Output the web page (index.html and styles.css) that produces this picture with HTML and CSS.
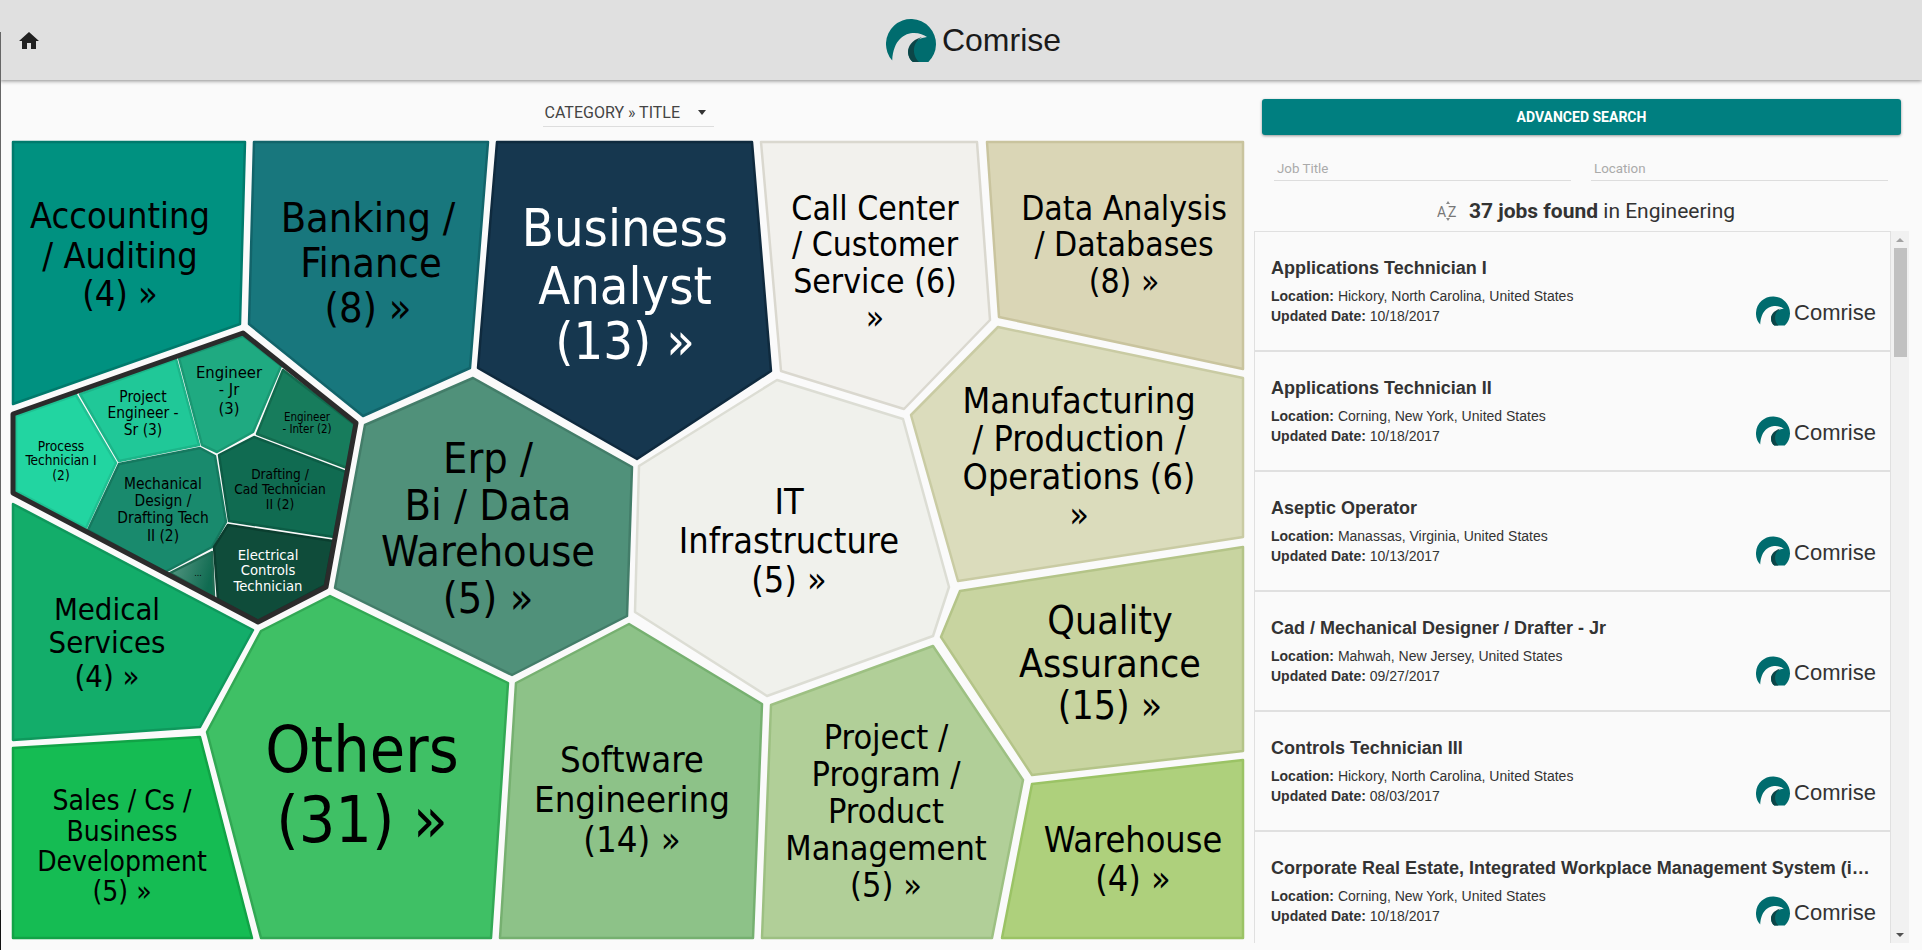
FILE: index.html
```html
<!DOCTYPE html>
<html lang="en">

<head>
    <meta charset="UTF-8">
    <meta name="viewport" content="width=device-width, initial-scale=1.0">
    <title>Comrise Jobs</title>
    <link rel="stylesheet" href="styles.css">
</head>

<body>

    <svg class="defs" width="0" height="0">
        <defs>
            <linearGradient id="more-fade" x1="0" y1="0" x2="1" y2="0.3">
                <stop offset="0" stop-color="#5a9a86" />
                <stop offset="1" stop-color="#106b51" />
            </linearGradient>
        </defs>
        <symbol id="swirl" viewBox="0 0 50 43">
            <path class="swirl-main" d="M6.2 41.5A25 25 0 1 1 42.35 43H27C20 38 18 22 41 18C32 11 8 10 6.2 41.5Z" />
            <path class="swirl-dark" d="M27 43C20 38 18 22 38 17.5C28 20 24 34 33 43Z" />
        </symbol>
    </svg>

    <header class="topbar">
        <a class="home" href="#">
            <svg width="24" height="24" viewBox="0 0 24 24">
                <path d="M10 20v-6h4v6h5v-8h3L12 3 2 12h3v8z" />
            </svg>
        </a>
        <div class="brand">
            <svg class="brand-mark" width="50" height="43">
                <use href="#swirl" />
            </svg>
            <span>Comrise</span>
        </div>
    </header>

    <div class="edge"></div>

    <main class="layout">
        <section class="chart">
            <div class="chart-head">
                <div class="picker">
                    <span>CATEGORY » TITLE</span>
                    <i class="caret"></i>
                </div>
            </div>

            <svg class="voronoi" width="1254" height="820" viewBox="0 130 1254 820">
                <polygon class="c-accounting" points="13,142 245,142 240,324 13,404" />
                <polygon class="c-banking" points="254,142 488,142 470,368 363,416 249,324" />
                <polygon class="c-business" points="497,142 752,142 771,371 637,459 478,368" />
                <polygon class="c-call" points="761,142 977,142 990,320 904,409 781,371" />
                <polygon class="c-data" points="987,142 1243,142 1243,369 999,317" />
                <polygon class="c-manufacturing" points="998,327 1243,378 1243,537 958,581 911,415" />
                <polygon class="c-it" points="777,380 903,419 949,587 933,636 767,696 635,612 639,466" />
                <polygon class="c-quality" points="960,591 1243,547 1243,751 1032,775 941,637" />
                <polygon class="c-warehouse" points="1032,784 1243,760 1243,938 1002,938" />
                <polygon class="c-project" points="933,646 1023,780 992,938 762,938 771,705" />
                <polygon class="c-software" points="629,624 762,704 753,938 500,938 516,683" />
                <polygon class="c-others" points="330,596 508,683 491,938 261,938 207,732 261,631" />
                <polygon class="c-erp" points="473,378 632,467 627,616 512,675 335,588 365,425" />
                <polygon class="c-medical" points="13,504 253,630 200,727 13,740" />
                <polygon class="c-sales" points="13,748 200,737 252,938 13,938" />

                <polygon class="group-bg" points="243,333 356,423 326,587 258,622 13,493 13,414" />
                <polygon class="c-process" points="16,416 76,395 116,463 86,528 16,491" />
                <polygon class="c-projeng" points="80,394 176,359 199,445 119,461" />
                <polygon class="c-engjr" points="179,358 243,336 281,366 253,432 217,452 202,445" />
                <polygon class="c-inter" points="283,370 355,425 347,468 257,434" />
                <polygon class="c-drafting" points="254,437 346,472 334,537 229,521 219,455" />
                <polygon class="c-mech" points="119,464 200,448 215,456 226,522 212,547 165,572 88,530" />
                <polygon class="c-more" fill="url(#more-fade)" points="170,573 212,552 214,597" />
                <polygon class="c-electrical" points="228,525 333,541 325,585 258,621 218,600 214,547" />
                <polygon class="group-ring" points="243,333 356,423 326,587 258,622 13,493 13,414" />

                <text class="fs-35" x="120"><tspan x="120" y="228">Accounting</tspan><tspan x="120" y="268">/ Auditing</tspan><tspan x="120" y="306">(4) »</tspan></text>
                <text class="fs-41" x="368"><tspan x="368" y="232">Banking /</tspan><tspan x="371" y="277">Finance</tspan><tspan x="368" y="322">(8) »</tspan></text>
                <text class="fs-52 light" x="625"><tspan x="625" y="246">Business</tspan><tspan x="625" y="304">Analyst</tspan><tspan x="625" y="359">(13) »</tspan></text>
                <text class="fs-33" x="875"><tspan x="875" y="220">Call Center</tspan><tspan x="875" y="256">/ Customer</tspan><tspan x="875" y="293">Service (6)</tspan><tspan x="875" y="329">»</tspan></text>
                <text class="fs-33" x="1124"><tspan x="1124" y="220">Data Analysis</tspan><tspan x="1124" y="256">/ Databases</tspan><tspan x="1124" y="293">(8) »</tspan></text>
                <text class="fs-35" x="1079"><tspan x="1079" y="413">Manufacturing</tspan><tspan x="1079" y="451">/ Production /</tspan><tspan x="1079" y="489">Operations (6)</tspan><tspan x="1079" y="527">»</tspan></text>
                <text class="fs-35" x="789"><tspan x="789" y="514">IT</tspan><tspan x="789" y="553">Infrastructure</tspan><tspan x="789" y="592">(5) »</tspan></text>
                <text class="fs-39" x="1110"><tspan x="1110" y="634">Quality</tspan><tspan x="1110" y="677">Assurance</tspan><tspan x="1110" y="719">(15) »</tspan></text>
                <text class="fs-35" x="1133"><tspan x="1133" y="852">Warehouse</tspan><tspan x="1133" y="891">(4) »</tspan></text>
                <text class="fs-34" x="886"><tspan x="886" y="749">Project /</tspan><tspan x="886" y="786">Program /</tspan><tspan x="886" y="823">Product</tspan><tspan x="886" y="860">Management</tspan><tspan x="886" y="897">(5) »</tspan></text>
                <text class="fs-36" x="632"><tspan x="632" y="772">Software</tspan><tspan x="632" y="812">Engineering</tspan><tspan x="632" y="852">(14) »</tspan></text>
                <text class="fs-64" x="362"><tspan x="362" y="772">Others</tspan><tspan x="362" y="842">(31) »</tspan></text>
                <text class="fs-43" x="488"><tspan x="488" y="473">Erp /</tspan><tspan x="488" y="520">Bi / Data</tspan><tspan x="488" y="566">Warehouse</tspan><tspan x="488" y="613">(5) »</tspan></text>
                <text class="fs-30" x="107"><tspan x="107" y="620">Medical</tspan><tspan x="107" y="653">Services</tspan><tspan x="107" y="687">(4) »</tspan></text>
                <text class="fs-28" x="122"><tspan x="122" y="810">Sales / Cs /</tspan><tspan x="122" y="841">Business</tspan><tspan x="122" y="871">Development</tspan><tspan x="122" y="901">(5) »</tspan></text>

                <text class="fs-13" x="61"><tspan x="61" y="451">Process</tspan><tspan x="61" y="465">Technician I</tspan><tspan x="61" y="480">(2)</tspan></text>
                <text class="fs-15" x="143"><tspan x="143" y="402">Project</tspan><tspan x="143" y="418">Engineer -</tspan><tspan x="143" y="435">Sr (3)</tspan></text>
                <text class="fs-16" x="229"><tspan x="229" y="378">Engineer</tspan><tspan x="229" y="395">- Jr</tspan><tspan x="229" y="414">(3)</tspan></text>
                <text class="fs-11" x="307"><tspan x="307" y="421">Engineer</tspan><tspan x="307" y="433">- Inter (2)</tspan></text>
                <text class="fs-13" x="280"><tspan x="280" y="479">Drafting /</tspan><tspan x="280" y="494">Cad Technician</tspan><tspan x="280" y="509">II (2)</tspan></text>
                <text class="fs-15" x="163"><tspan x="163" y="489">Mechanical</tspan><tspan x="163" y="506">Design /</tspan><tspan x="163" y="523">Drafting Tech</tspan><tspan x="163" y="541">II (2)</tspan></text>
                <text class="fs-9" x="198" y="576">...</text>
                <text class="fs-14 light" x="268"><tspan x="268" y="560">Electrical</tspan><tspan x="268" y="575">Controls</tspan><tspan x="268" y="591">Technician</tspan></text>
            </svg>
        </section>

        <aside class="side">
            <button class="search-btn">ADVANCED SEARCH</button>

            <div class="filters">
                <input type="text" placeholder="Job Title">
                <input type="text" placeholder="Location">
            </div>

            <div class="found">
                <svg class="sort" width="22" height="20" viewBox="0 0 22 20">
                    <path d="M11 0l2 3H9zM11 20l-2-3h4z" />
                    <text x="0" y="16">A</text>
                    <text x="11" y="16">Z</text>
                </svg>
                <span><b>37 jobs found</b> in Engineering</span>
            </div>

            <div class="results">
                <div class="list">
                    <div class="job">
                        <h3>Applications Technician I</h3>
                        <p><b>Location:</b> Hickory, North Carolina, United States</p>
                        <p><b>Updated Date:</b> 10/18/2017</p>
                        <div class="job-logo"><svg width="34" height="30"><use href="#swirl" /></svg><span>Comrise</span></div>
                    </div>
                    <div class="job">
                        <h3>Applications Technician II</h3>
                        <p><b>Location:</b> Corning, New York, United States</p>
                        <p><b>Updated Date:</b> 10/18/2017</p>
                        <div class="job-logo"><svg width="34" height="30"><use href="#swirl" /></svg><span>Comrise</span></div>
                    </div>
                    <div class="job">
                        <h3>Aseptic Operator</h3>
                        <p><b>Location:</b> Manassas, Virginia, United States</p>
                        <p><b>Updated Date:</b> 10/13/2017</p>
                        <div class="job-logo"><svg width="34" height="30"><use href="#swirl" /></svg><span>Comrise</span></div>
                    </div>
                    <div class="job">
                        <h3>Cad / Mechanical Designer / Drafter - Jr</h3>
                        <p><b>Location:</b> Mahwah, New Jersey, United States</p>
                        <p><b>Updated Date:</b> 09/27/2017</p>
                        <div class="job-logo"><svg width="34" height="30"><use href="#swirl" /></svg><span>Comrise</span></div>
                    </div>
                    <div class="job">
                        <h3>Controls Technician III</h3>
                        <p><b>Location:</b> Hickory, North Carolina, United States</p>
                        <p><b>Updated Date:</b> 08/03/2017</p>
                        <div class="job-logo"><svg width="34" height="30"><use href="#swirl" /></svg><span>Comrise</span></div>
                    </div>
                    <div class="job">
                        <h3>Corporate Real Estate, Integrated Workplace Management System (i…</h3>
                        <p><b>Location:</b> Corning, New York, United States</p>
                        <p><b>Updated Date:</b> 10/18/2017</p>
                        <div class="job-logo"><svg width="34" height="30"><use href="#swirl" /></svg><span>Comrise</span></div>
                    </div>
                </div>
                <div class="rail">
                    <i class="rail-up"></i>
                    <i class="thumb"></i>
                    <i class="rail-down"></i>
                </div>
            </div>
        </aside>
    </main>

</body>

</html>
```

FILE: styles.css
```css
* {
    box-sizing: border-box;
}

html,
body {
    height: 100%;
}

body {
    margin: 0;
    overflow: hidden;
    background-color: #fafafa;
    font-family: Roboto, sans-serif;
    color: #333;
}

.defs {
    position: absolute;
}

.swirl-main {
    fill: #006c6e;
}

.swirl-dark {
    fill: #0c4648;
}

/* top bar */
.topbar {
    position: relative;
    display: flex;
    justify-content: center;
    align-items: center;
    height: 80px;
    background-color: #e0e0e0;
    box-shadow: 0 1px 4px rgba(0, 0, 0, 0.45);
}

.home {
    position: absolute;
    left: 17px;
    top: 29px;
    line-height: 0;
}

.home path {
    fill: #212121;
}

.brand {
    display: flex;
    align-items: center;
    gap: 6px;
    margin-left: 25px;
    font-family: "Liberation Sans", Arial, sans-serif;
    font-size: 32px;
    color: #1a1a1a;
}

.brand-mark {
    display: block;
}

.edge {
    position: absolute;
    left: 0;
    top: 32px;
    bottom: 0;
    width: 1px;
    background: linear-gradient(#666 878px, #111 878px);
}

/* columns */
.layout {
    display: flex;
    height: 870px;
}

.chart {
    width: 1254px;
    flex: none;
}

.chart-head {
    display: flex;
    justify-content: center;
    height: 50px;
    padding-top: 22px;
    padding-left: 2px;
}

.picker {
    position: relative;
    width: 171px;
    height: 25px;
    padding-left: 2px;
    border-bottom: 1px solid #ddd;
    font-size: 16px;
    line-height: 22px;
    color: #444;
}

.caret {
    position: absolute;
    right: 8px;
    top: 8px;
    border-left: 4px solid transparent;
    border-right: 4px solid transparent;
    border-top: 5px solid #333;
}

/* voronoi chart */
.voronoi {
    display: block;
}

.voronoi polygon {
    stroke-width: 2.5;
    stroke-linejoin: round;
}

.voronoi text {
    font-family: "DejaVu Sans Condensed", "DejaVu Sans", sans-serif;
    font-stretch: condensed;
    text-anchor: middle;
    fill: #000;
}

.voronoi text.light {
    fill: #fff;
}

.fs-9 { font-size: 8.8px; }
.fs-11 { font-size: 11.5px; }
.fs-13 { font-size: 13.6px; }
.fs-14 { font-size: 14.7px; }
.fs-15 { font-size: 15.4px; }
.fs-16 { font-size: 16.5px; }
.fs-28 { font-size: 28px; }
.fs-30 { font-size: 30.8px; }
.fs-33 { font-size: 33.5px; }
.fs-34 { font-size: 34px; }
.fs-35 { font-size: 35.8px; }
.fs-36 { font-size: 36.3px; }
.fs-39 { font-size: 39px; }
.fs-41 { font-size: 41.2px; }
.fs-43 { font-size: 42.9px; }
.fs-52 { font-size: 52px; }
.fs-64 { font-size: 64px; }

.c-accounting { fill: #009180; stroke: #007a6c; }
.c-banking { fill: #18777d; stroke: #12646a; }
.c-business { fill: #16374f; stroke: #0f2a3e; }
.c-call { fill: #f2f1ed; stroke: #dad8cf; }
.c-data { fill: #dad6b6; stroke: #c9c49e; }
.c-manufacturing { fill: #dbdcbc; stroke: #c9cba3; }
.c-it { fill: #f0f1ec; stroke: #dcddd4; }
.c-quality { fill: #c8d4a0; stroke: #b4c488; }
.c-warehouse { fill: #aed07c; stroke: #9bc365; }
.c-project { fill: #b1cf98; stroke: #9dc082; }
.c-software { fill: #8dc288; stroke: #76b070; }
.c-others { fill: #3fc065; stroke: #32a854; }
.c-erp { fill: #50917a; stroke: #437d69; }
.c-medical { fill: #13ad6a; stroke: #0f985c; }
.c-sales { fill: #15bc53; stroke: #11a346; }

.group-bg { fill: #fafafa; stroke: none; }
.voronoi .group-ring { fill: none; stroke: #2b2b2b; stroke-width: 5; }
.c-process { fill: #22d5a1; stroke: #1fc293; }
.c-projeng { fill: #20c898; stroke: #1cb589; }
.c-engjr { fill: #1faa81; stroke: #1a9873; }
.c-inter { fill: #177c5c; stroke: #126b4e; }
.c-drafting { fill: #106b51; stroke: #0c5c45; }
.c-mech { fill: #198a6d; stroke: #15795f; }
.c-more { stroke: #1f6a52; }
.c-electrical { fill: #0f4c3a; stroke: #0b3e2f; }

/* right side */
.side {
    flex: 1;
    min-width: 0;
    display: flex;
    flex-direction: column;
    height: 863px;
}

.search-btn {
    display: block;
    width: 639px;
    height: 36px;
    margin: 19px 0 0 8px;
    padding: 0 0 1px;
    border: 0;
    border-radius: 3px;
    background-color: #007f80;
    box-shadow: 0 1px 3px rgba(0, 0, 0, 0.4);
    font-family: Roboto, sans-serif;
    font-weight: 700;
    font-size: 14px;
    color: #fff;
}

.filters {
    display: flex;
    gap: 20px;
    margin: 22px 0 0 20px;
    width: 614px;
}

.filters input {
    flex: 1;
    min-width: 0;
    height: 24px;
    padding: 0 3px;
    border: 0;
    border-bottom: 1px solid #ddd;
    background: transparent;
    font-family: Roboto, sans-serif;
    font-size: 13.33px;
}

.filters input::placeholder {
    color: #aaa;
}

.found {
    display: flex;
    justify-content: center;
    align-items: center;
    gap: 10px;
    height: 50px;
    width: 655px;
    padding: 10px 0 0 9px;
    font-size: 21px;
    color: #333;
}

.sort path {
    fill: #888;
}

.sort text {
    font-size: 14px;
    fill: #777;
}

.results {
    flex: 1;
    min-height: 0;
    display: flex;
    width: 655px;
}

.list {
    flex: 1;
    min-width: 0;
    overflow: hidden;
    border: solid #e0e0e0;
    border-width: 1px 1px 0 1px;
}

.job {
    position: relative;
    height: 120px;
    padding: 26px 16px 0;
    border-bottom: 2px solid #e0e0e0;
}

.job h3 {
    margin: 0 0 8px;
    font-family: "Liberation Sans", Arial, sans-serif;
    font-size: 18px;
    line-height: 20px;
    white-space: nowrap;
    overflow: hidden;
    text-overflow: ellipsis;
}

.job p {
    margin: 0;
    font-family: "Liberation Sans", Arial, sans-serif;
    font-size: 14px;
    line-height: 20px;
}

.job-logo {
    position: absolute;
    right: 14px;
    top: 64px;
    display: flex;
    align-items: center;
    gap: 4px;
    font-family: "Liberation Sans", Arial, sans-serif;
    font-size: 22px;
}

.job-logo svg {
    display: block;
}

.job-logo span {
    padding-top: 4px;
}

.rail {
    position: relative;
    width: 18px;
    flex: none;
    background-color: #f1f1f1;
}

.thumb {
    position: absolute;
    left: 3px;
    top: 17px;
    width: 13px;
    height: 109px;
    background-color: #c1c1c1;
}

.rail-up,
.rail-down {
    position: absolute;
    left: 5px;
    border-left: 4px solid transparent;
    border-right: 4px solid transparent;
}

.rail-up {
    top: 7px;
    border-bottom: 4px solid #a3a3a3;
}

.rail-down {
    bottom: 6px;
    border-top: 4px solid #505050;
}
```
